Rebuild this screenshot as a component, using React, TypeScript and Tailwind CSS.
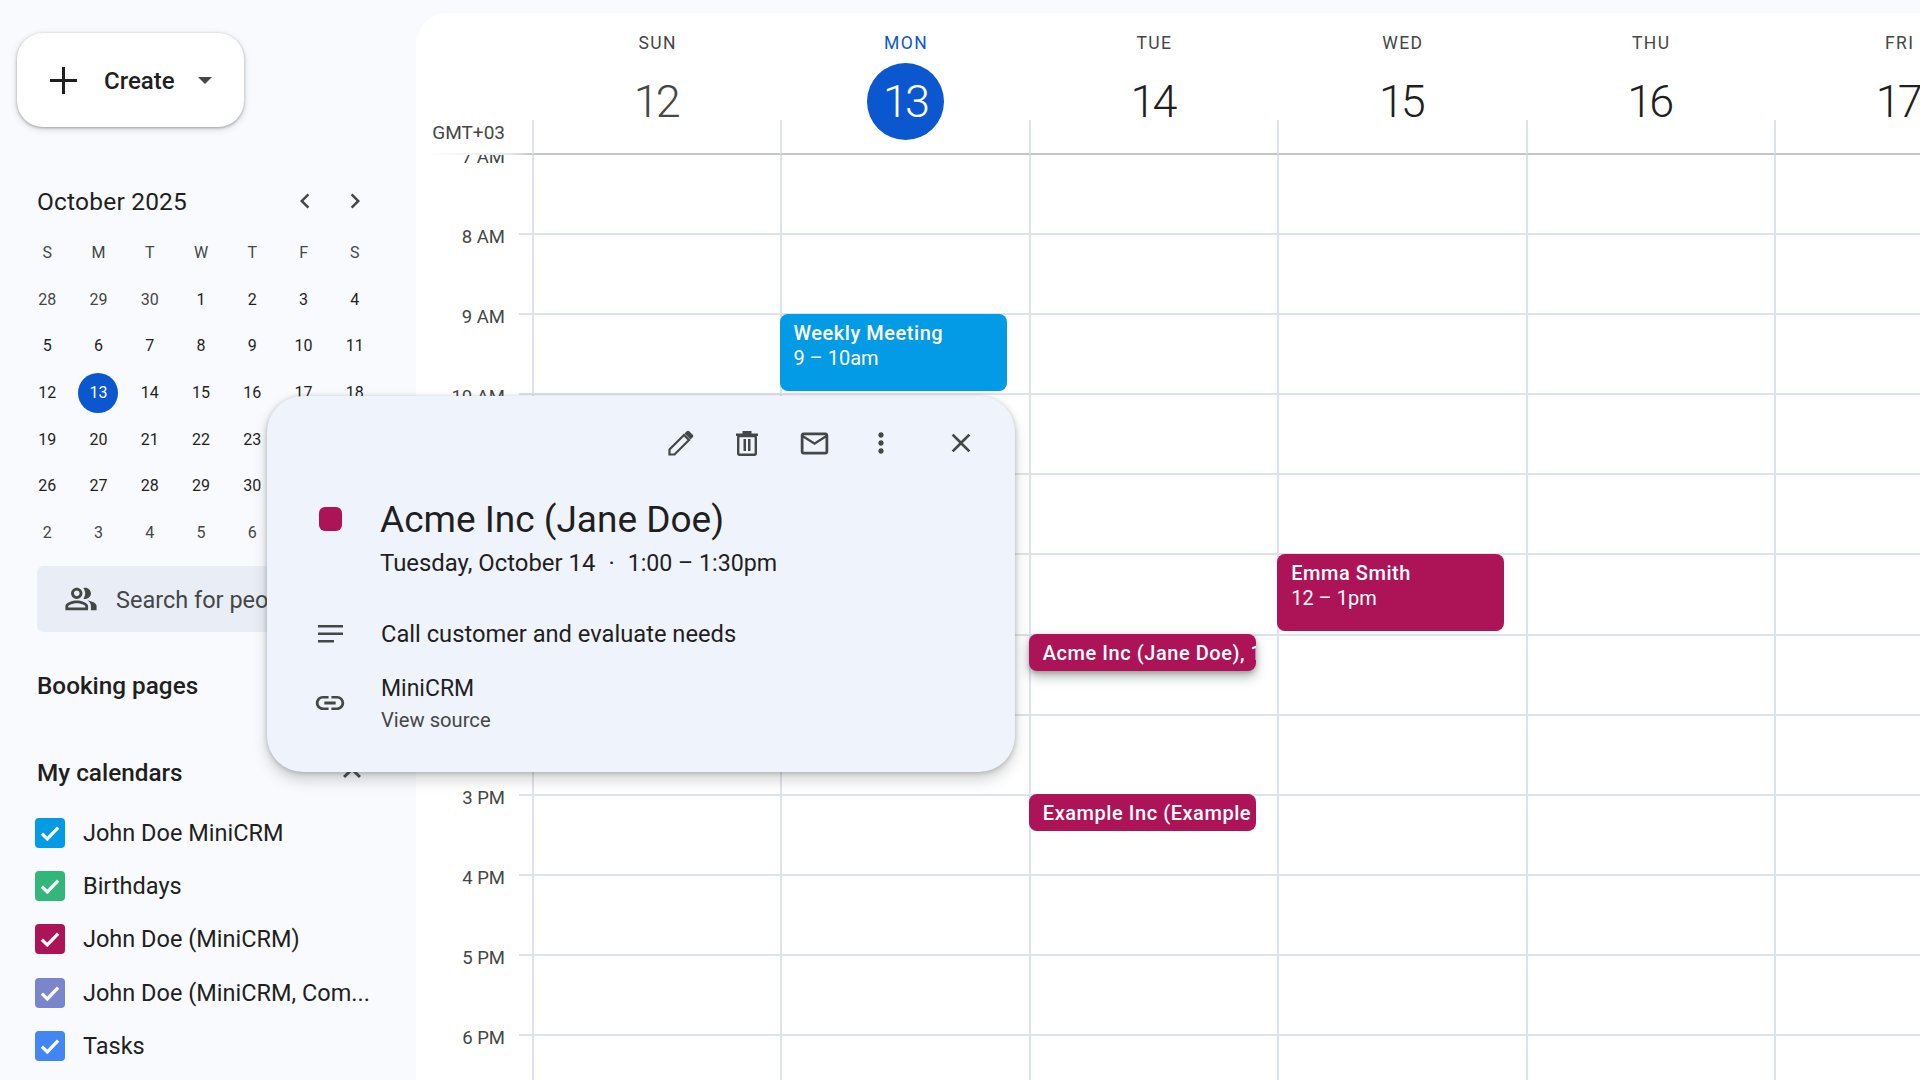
import React from "react";
import { MdOutlinePeopleAlt } from "react-icons/md";

const sans = "font-['Roboto','Liberation_Sans',sans-serif]";

// mini month, muted = other month
const miniWeeks = [
  [["28", 1], ["29", 1], ["30", 1], ["1"], ["2"], ["3"], ["4"]],
  [["5"], ["6"], ["7"], ["8"], ["9"], ["10"], ["11"]],
  [["12"], ["13"], ["14"], ["15"], ["16"], ["17"], ["18"]],
  [["19"], ["20"], ["21"], ["22"], ["23"], ["24"], ["25"]],
  [["26"], ["27"], ["28"], ["29"], ["30"], ["31"], ["1", 1]],
  [["2", 1], ["3", 1], ["4", 1], ["5", 1], ["6", 1], ["7", 1], ["8", 1]],
] as [string, number?][][];

const calendars = [
  { name: "John Doe MiniCRM", box: "bg-[#039be5]" },
  { name: "Birthdays", box: "bg-[#33b679]" },
  { name: "John Doe (MiniCRM)", box: "bg-[#ad1457]" },
  { name: "John Doe (MiniCRM, Com...", box: "bg-[#7986cb]" },
  { name: "Tasks", box: "bg-[#4285f4]" },
];

const days = [
  { label: "SUN", num: "12", muted: true },
  { label: "MON", num: "13", today: true },
  { label: "TUE", num: "14" },
  { label: "WED", num: "15" },
  { label: "THU", num: "16" },
  { label: "FRI", num: "17" },
  { label: "SAT", num: "18", muted: true },
];

const hours = ["7 AM", "8 AM", "9 AM", "10 AM", "11 AM", "12 PM", "1 PM", "2 PM", "3 PM", "4 PM", "5 PM", "6 PM"];

function Icon({ d, className }: { d: string; className?: string }) {
  return (
    <svg viewBox="0 0 24 24" className={className} fill="currentColor">
      <path d={d} />
    </svg>
  );
}

function Sidebar() {
  return (
    <aside className="w-[416px] shrink-0 h-full overflow-hidden flex flex-col">
      <button className="ml-[17px] mt-[33px] w-[227px] h-[94px] shrink-0 rounded-[26px] bg-white shadow-[0_1px_3px_rgba(60,64,67,0.4),0_2px_7px_rgba(60,64,67,0.18)] flex items-center">
        <svg viewBox="0 0 27 27" className="ml-[33px] w-[27px] h-[27px] text-[#1f1f1f]" fill="currentColor">
          <rect x="12" y="0" width="3" height="27" />
          <rect x="0" y="12" width="27" height="3" />
        </svg>
        <span className="ml-[27px] mt-[1px] text-[24px] font-medium text-[#1f1f1f]">Create</span>
        <span className="ml-[23px] w-0 h-0 border-x-[7px] border-x-transparent border-t-[7px] border-t-[#444746]" />
      </button>

      <div className="mt-[59px] h-[30px] shrink-0 flex items-center pl-[37px]">
        <span className="mt-[2px] text-[24.5px] text-[#1f1f1f] w-[253px] tracking-[0.2px]">October 2025</span>
        <svg viewBox="0 0 24 24" className="w-[30px] h-[30px] text-[#444746]" fill="currentColor">
          <path d="M15.41 7.41 14 6l-6 6 6 6 1.41-1.41L10.83 12z" />
        </svg>
        <svg viewBox="0 0 24 24" className="ml-[20px] w-[30px] h-[30px] text-[#444746]" fill="currentColor">
          <path d="M8.59 16.59 10 18l6-6-6-6-1.41 1.41L13.17 12z" />
        </svg>
      </div>

      <div className="mt-[14px] ml-[21.5px] w-[359px] shrink-0 grid grid-cols-7 auto-rows-[46.6px] items-center justify-items-center text-[16px] text-[#1f1f1f]">
        {["S", "M", "T", "W", "T", "F", "S"].map((d, i) => (
          <span key={i} className="text-[#444746]">{d}</span>
        ))}
        {miniWeeks.flat().map(([n, muted], i) =>
          n === "13" ? (
            <span key={i} className="w-[40px] h-[40px] rounded-full bg-[#0b57d0] text-white flex items-center justify-center">{n}</span>
          ) : (
            <span key={i} className={muted ? "text-[#444746]" : ""}>{n}</span>
          )
        )}
      </div>

      <div className="mt-[10px] ml-[37px] w-[342px] h-[66px] shrink-0 rounded-[6px] bg-[#e9eef6] flex items-center pl-[27px] text-[#444746]">
        <MdOutlinePeopleAlt className="w-[34px] h-[34px]" />
        <span className="ml-[18px] mt-[2px] text-[23.5px]">Search for people</span>
      </div>

      <div className="mt-[39px] ml-[37px] h-[30px] shrink-0 flex items-center text-[24.3px] font-medium text-[#1f1f1f]">Booking pages</div>

      <div className="mt-[57px] ml-[37px] h-[30px] w-[330px] shrink-0 flex items-center justify-between text-[24.3px] font-medium text-[#1f1f1f]">
        My calendars
        <svg viewBox="0 0 24 24" className="w-[36px] h-[36px] mr-[-3px] text-[#444746]" fill="currentColor">
          <path d="M7.41 15.41 12 10.83l4.59 4.58L18 14l-6-6-6 6z" />
        </svg>
      </div>

      <div className="mt-[18px] ml-[35px] flex flex-col">
        {calendars.map((c) => (
          <div key={c.name} className="h-[53.33px] shrink-0 flex items-center">
            <span className={`w-[30px] h-[30px] rounded-[4px] flex items-center justify-center ${c.box}`}>
              <svg viewBox="0 0 24 24" className="w-[26px] h-[26px]" fill="none" stroke="white" strokeWidth="3">
                <path d="M4.5 12.5l5 5 10-10.5" />
              </svg>
            </span>
            <span className="ml-[18px] mt-[1px] text-[23.5px] text-[#1f1f1f] whitespace-nowrap">{c.name}</span>
          </div>
        ))}
      </div>
    </aside>
  );
}

function EventChip({ title, time, className }: { title: string; time?: string; className: string }) {
  return (
    <div className={`absolute -left-[2px] w-[227px] overflow-hidden whitespace-nowrap rounded-[8px] text-white text-[20px] leading-[25px] ${className}`}>
      <div className="font-medium tracking-[0.55px]">{title}</div>
      {time && <div>{time}</div>}
    </div>
  );
}

function DayGrid() {
  return (
    <main className="flex-1 min-w-0 mt-[13px] rounded-tl-[32px] bg-white overflow-hidden flex flex-col">
      {/* header */}
      <div className="h-[142px] shrink-0 flex">
        <div className="w-[116px] shrink-0 flex flex-col pt-[107px]">
          <div className="h-[33px] pr-[27px] text-right text-[19px] leading-[26px] text-[#444746]">GMT+03</div>
          <div className="h-[2px] ml-[13px] bg-linear-to-r from-white via-[#e4e5e6] via-80% to-[#c4c7c5]" />
        </div>
        {days.map((d) => (
          <div key={d.label} className="w-[248.4px] shrink-0 flex flex-col">
            <div className="h-[107px] flex flex-col items-center">
              <div className={`mt-[18px] ml-[3px] h-[24px] leading-[24px] text-[17.5px] tracking-[1.4px] ${d.today ? "text-[#0b57d0]" : "text-[#444746]"}`}>{d.label}</div>
              <div className={`mt-[8px] w-[77px] h-[77px] shrink-0 rounded-full flex items-center justify-center text-[45px] font-light tracking-[-3px] pr-[1px] relative z-10 ${d.today ? "ml-[2px] bg-[#0b57d0] text-white" : d.muted ? "text-[#444746]" : "text-[#1f1f1f]"}`}>{d.num}</div>
            </div>
            <div className="flex-1 border-l-2 border-b-2 border-l-[#dde3ea] border-b-[#c4c7c5]" />
          </div>
        ))}
      </div>

      {/* body */}
      <div className="flex-1 min-h-0 flex overflow-hidden">
        <div className="w-[116px] shrink-0 flex flex-col">
          {hours.map((h) => (
            <div key={h} className="h-[80.1px] shrink-0 relative">
              <span className="absolute right-[27px] top-[-11px] text-[18.5px] leading-[26px] text-[#444746] whitespace-nowrap">{h}</span>
              <span className="absolute right-0 bottom-0 w-[13px] border-b-2 border-[#dde3ea]" />
            </div>
          ))}
        </div>
        {days.map((d) => (
          <div key={d.label} className="w-[248.4px] shrink-0 relative border-l-2 border-[#dde3ea]">
            {hours.map((h) => (
              <div key={h} className="h-[80.1px] border-b-2 border-[#dde3ea]" />
            ))}
            {d.label === "MON" && (
              <EventChip title="Weekly Meeting" time="9 – 10am" className="top-[159px] h-[77px] bg-[#039be5] pl-[13px] pt-[7px]" />
            )}
            {d.label === "TUE" && (
              <>
                <EventChip title="Acme Inc (Jane Doe), 1" className="top-[479px] h-[37px] bg-[#ad1457] pl-[14px] pt-[7px] pr-[1px] shadow-[0_6px_12px_rgba(60,64,67,0.35),0_2px_4px_rgba(60,64,67,0.3)]" />
                <EventChip title="Example Inc (Example" className="top-[639px] h-[37px] bg-[#ad1457] pl-[14px] pt-[7px] pr-[4px]" />
              </>
            )}
            {d.label === "WED" && (
              <EventChip title="Emma Smith" time="12 – 1pm" className="top-[399px] h-[77px] bg-[#ad1457] pl-[14px] pt-[7px]" />
            )}
          </div>
        ))}
      </div>
    </main>
  );
}

function EventPopup() {
  return (
    <div className="absolute left-[267px] top-[396px] w-[748px] h-[376px] rounded-[36px] bg-[#eff3fb] shadow-[0_8px_14px_rgba(60,64,67,0.22),0_1px_5px_rgba(60,64,67,0.3)] z-20 text-[#1f1f1f]">
      <div className="h-[94px] flex items-center pl-[401px] text-[#444746]">
        <svg viewBox="0 0 26 26" className="w-[26px] h-[26px]">
          <path d="M1.5 24.5v-5L16 5l5 5L6.5 24.5z" fill="none" stroke="currentColor" strokeWidth="2.2" />
          <path d="M16.5 3.5l2-2a2 2 0 0 1 3 0l3 3a2 2 0 0 1 0 3l-2 2z" fill="currentColor" />
        </svg>
        <svg viewBox="0 0 22 25" className="ml-[42px] w-[22px] h-[25px]" fill="currentColor">
          <rect x="6.5" y="0" width="9" height="3" />
          <rect x="0" y="2.5" width="22" height="2.5" />
          <rect x="2.2" y="5" width="17.6" height="18.8" rx="1.5" fill="none" stroke="currentColor" strokeWidth="2.4" />
          <rect x="7.5" y="8" width="2.5" height="12" />
          <rect x="12" y="8" width="2.5" height="12" />
        </svg>
        <Icon className="ml-[40px] w-[33px] h-[33px]" d="M22 6c0-1.1-.9-2-2-2H4c-1.1 0-2 .9-2 2v12c0 1.1.9 2 2 2h16c1.1 0 2-.9 2-2V6zm-2 0l-8 5-8-5h16zm0 12H4V8l8 5 8-5v10z" />
        <Icon className="ml-[34px] w-[32px] h-[32px]" d="M12 8c1.1 0 2-.9 2-2s-.9-2-2-2-2 .9-2 2 .9 2 2 2zm0 2c-1.1 0-2 .9-2 2s.9 2 2 2 2-.9 2-2-.9-2-2-2zm0 6c-1.1 0-2 .9-2 2s.9 2 2 2 2-.9 2-2-.9-2-2-2z" />
        <Icon className="ml-[48px] w-[32px] h-[32px]" d="M19 6.41 17.59 5 12 10.59 6.41 5 5 6.41 10.59 12 5 17.59 6.41 19 12 13.41 17.59 19 19 17.59 13.41 12z" />
      </div>

      <div className="flex pl-[52px]">
        <span className="mt-[17px] w-[23px] h-[24px] rounded-[6px] bg-[#ad1457]" />
        <div className="ml-[38px]">
          <div className="mt-[5px] text-[37px] leading-[50px]">Acme Inc (Jane Doe)</div>
          <div className="mt-[3px] text-[23.9px] leading-[30px] whitespace-nowrap">
            Tuesday, October 14
            <span className="mx-[13px]">·</span>
            <span className="text-[23.2px]">1:00 – 1:30pm</span>
          </div>
        </div>
      </div>

      <div className="mt-[40px] flex items-center pl-[51px] h-[32px]">
        <svg viewBox="0 0 25 18" className="w-[25px] h-[18px] text-[#444746]" fill="currentColor">
          <rect x="0" y="0" width="25" height="2.5" />
          <rect x="0" y="7.5" width="25" height="2.5" />
          <rect x="0" y="15" width="16" height="2.5" />
        </svg>
        <span className="ml-[38px] mt-[1px] text-[23.7px]">Call customer and evaluate needs</span>
      </div>

      <div className="mt-[21px] flex items-center pl-[46px]">
        <Icon className="w-[34px] h-[34px] text-[#444746]" d="M3.9 12c0-1.71 1.39-3.1 3.1-3.1h4V7H7c-2.76 0-5 2.24-5 5s2.24 5 5 5h4v-1.9H7c-1.71 0-3.1-1.39-3.1-3.1zM8 13h8v-2H8v2zm9-6h-4v1.9h4c1.71 0 3.1 1.39 3.1 3.1s-1.39 3.1-3.1 3.1h-4V17h4c2.76 0 5-2.24 5-5s-2.24-5-5-5z" />
        <div className="ml-[34px] pt-[3px]">
          <div className="text-[23px] leading-[30px]">MiniCRM</div>
          <div className="mt-[1px] text-[20.2px] leading-[30px] text-[#444746]">View source</div>
        </div>
      </div>
    </div>
  );
}

export default function App() {
  return (
    <div className={`relative w-[1920px] h-[1080px] overflow-hidden flex bg-[#f8fafd] ${sans}`}>
      <Sidebar />
      <DayGrid />
      <EventPopup />
    </div>
  );
}
